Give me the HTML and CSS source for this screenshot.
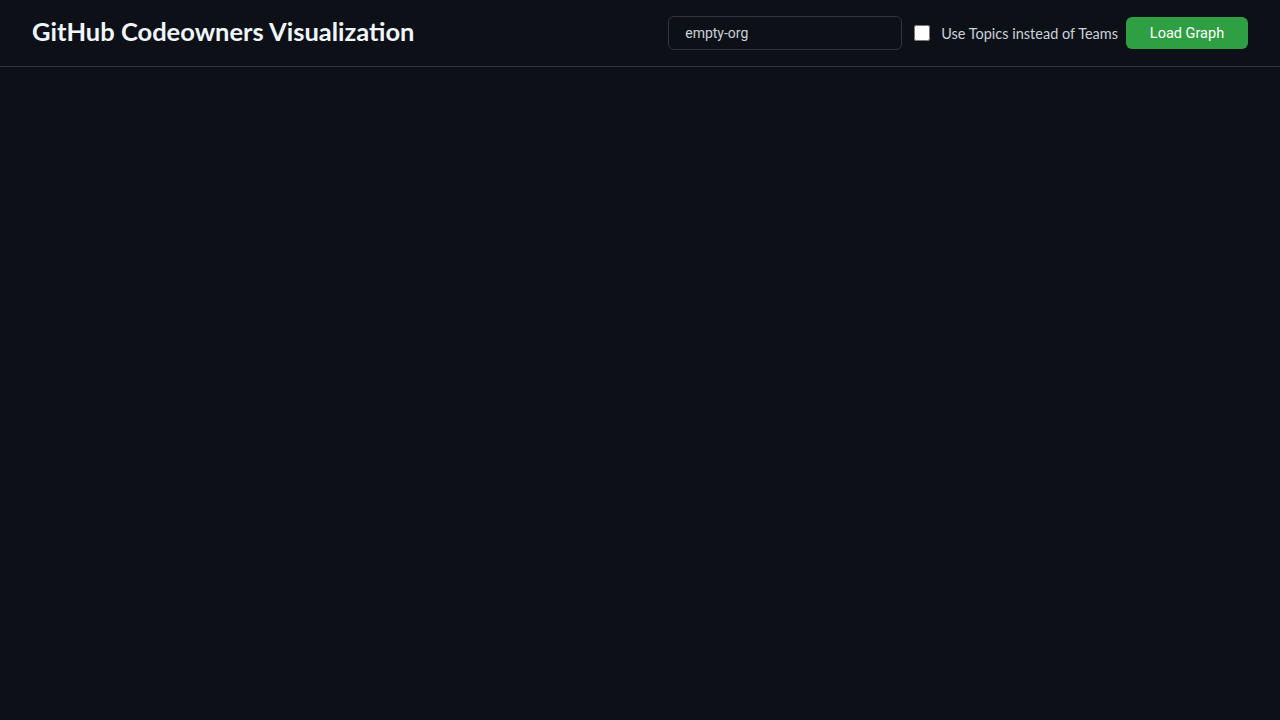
FILE: index.html
```html
<!DOCTYPE html>
<html>
<head>
<meta charset="utf-8">
<link rel="stylesheet" href="styles.css">
</head>
<body>
<header class="header">
  <h1 class="title">GitHub Codeowners Visualization</h1>
  <div class="controls">
    <input class="org-input" type="text" value="empty-org">
    <label class="topic-label"><input class="topic-check" type="checkbox"><span>Use Topics instead of Teams</span></label>
    <button class="load-btn">Load Graph</button>
  </div>
</header>
<main class="graph"></main>
</body>
</html>
```
FILE: styles.css
```css
html, body {
  margin: 0;
  padding: 0;
  height: 100%;
  background: #0d1117;
  color: #e6edf3;
  font-family: Lato, "Liberation Sans", sans-serif;
}
.header {
  height: 67px;
  box-sizing: border-box;
  border-bottom: 1px solid #30363d;
  padding: 0 32px;
  display: flex;
  align-items: center;
  justify-content: space-between;
}
.title {
  margin: 0 0 5px 0;
  font-size: 25.5px;
  font-weight: 700;
  color: #f0f6fc;
}
.controls {
  display: flex;
  align-items: center;
}
.org-input {
  width: 234px;
  height: 34px;
  box-sizing: border-box;
  background: #0d1117;
  border: 1px solid #30363d;
  border-radius: 6px;
  padding: 0 16px;
  color: #c9d1d9;
  font-family: Roboto, "Liberation Sans", sans-serif;
  font-size: 14px;
  outline: none;
}
.topic-label {
  display: flex;
  align-items: center;
  margin-left: 12px;
  font-size: 14.5px;
  color: #c9d1d9;
}
.topic-check {
  width: 16px;
  height: 16px;
  margin: 0 11px 0 0;
}
.load-btn {
  margin-left: 8px;
  width: 122px;
  height: 32px;
  background: #2ea043;
  color: #ffffff;
  border: none;
  border-radius: 6px;
  font-family: Roboto, "Liberation Sans", sans-serif;
  font-size: 14.5px;
}
.graph {
  height: calc(100% - 67px);
}
```
